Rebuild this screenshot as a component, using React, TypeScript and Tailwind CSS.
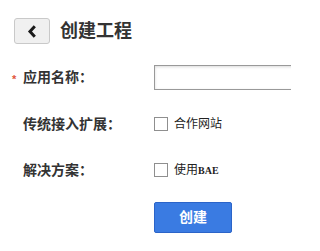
import React from 'react'

const font = { fontFamily: '"Liberation Sans", "Noto Sans CJK SC", sans-serif' }

function Checkbox({ label }: { label: React.ReactNode }) {
  return (
    <label className="flex items-center gap-[6px] text-[12px] text-[#222]">
      <span className="w-[14px] h-[14px] border border-[#8f8f8f] bg-white shrink-0" />
      {label}
    </label>
  )
}

export default function App() {
  return (
    <div className="w-[291px] h-[251px] bg-white overflow-hidden" style={font}>
      {/* Header */}
      <div className="flex items-center gap-[10px] pl-[14px] pt-[18px]">
        <button className="w-[36px] h-[26px] rounded-[3px] border border-[#c9c9c9] bg-[#f0f0f0] flex items-center justify-center">
          <svg width="10" height="13" viewBox="0 0 10 13">
            <path d="M7.8 1.3 L3 6.5 L7.8 11.7" fill="none" stroke="#1a1a1a" strokeWidth="3" />
          </svg>
        </button>
        <h1 className="text-[18px] font-bold text-[#333] leading-none">创建工程</h1>
      </div>

      {/* Form */}
      <div className="grid grid-cols-[154px_200px] mt-[21px]">
        <div className="flex items-center h-[25px] pl-[12px] text-[14px] font-bold text-[#333]">
          <span className="text-[#e0553a] text-[11px] w-[11px] mt-[4px]">*</span>
          应用名称：
        </div>
        <input className="h-[25px] w-[200px] border border-[#999] shadow-[inset_0_1px_3px_rgba(0,0,0,0.15)] outline-none" />

        <div className="flex items-center h-[14px] mt-[27px] pl-[23px] text-[14px] font-bold text-[#333]">传统接入扩展：</div>
        <div className="flex items-center h-[14px] mt-[27px]">
          <Checkbox label="合作网站" />
        </div>

        <div className="flex items-center h-[14px] mt-[32px] pl-[23px] text-[14px] font-bold text-[#333]">解决方案：</div>
        <div className="flex items-center h-[14px] mt-[32px]">
          <Checkbox label={<span>使用<span className="text-[10px] font-bold" style={{ fontFamily: '"Liberation Serif", serif' }}>BAE</span></span>} />
        </div>

        <div />
        <button className="mt-[25px] w-[78px] h-[31px] rounded-[2px] border border-[#2b64c8] bg-[#3a7be2] text-white text-[14px] font-bold">创建</button>
      </div>
    </div>
  )
}
